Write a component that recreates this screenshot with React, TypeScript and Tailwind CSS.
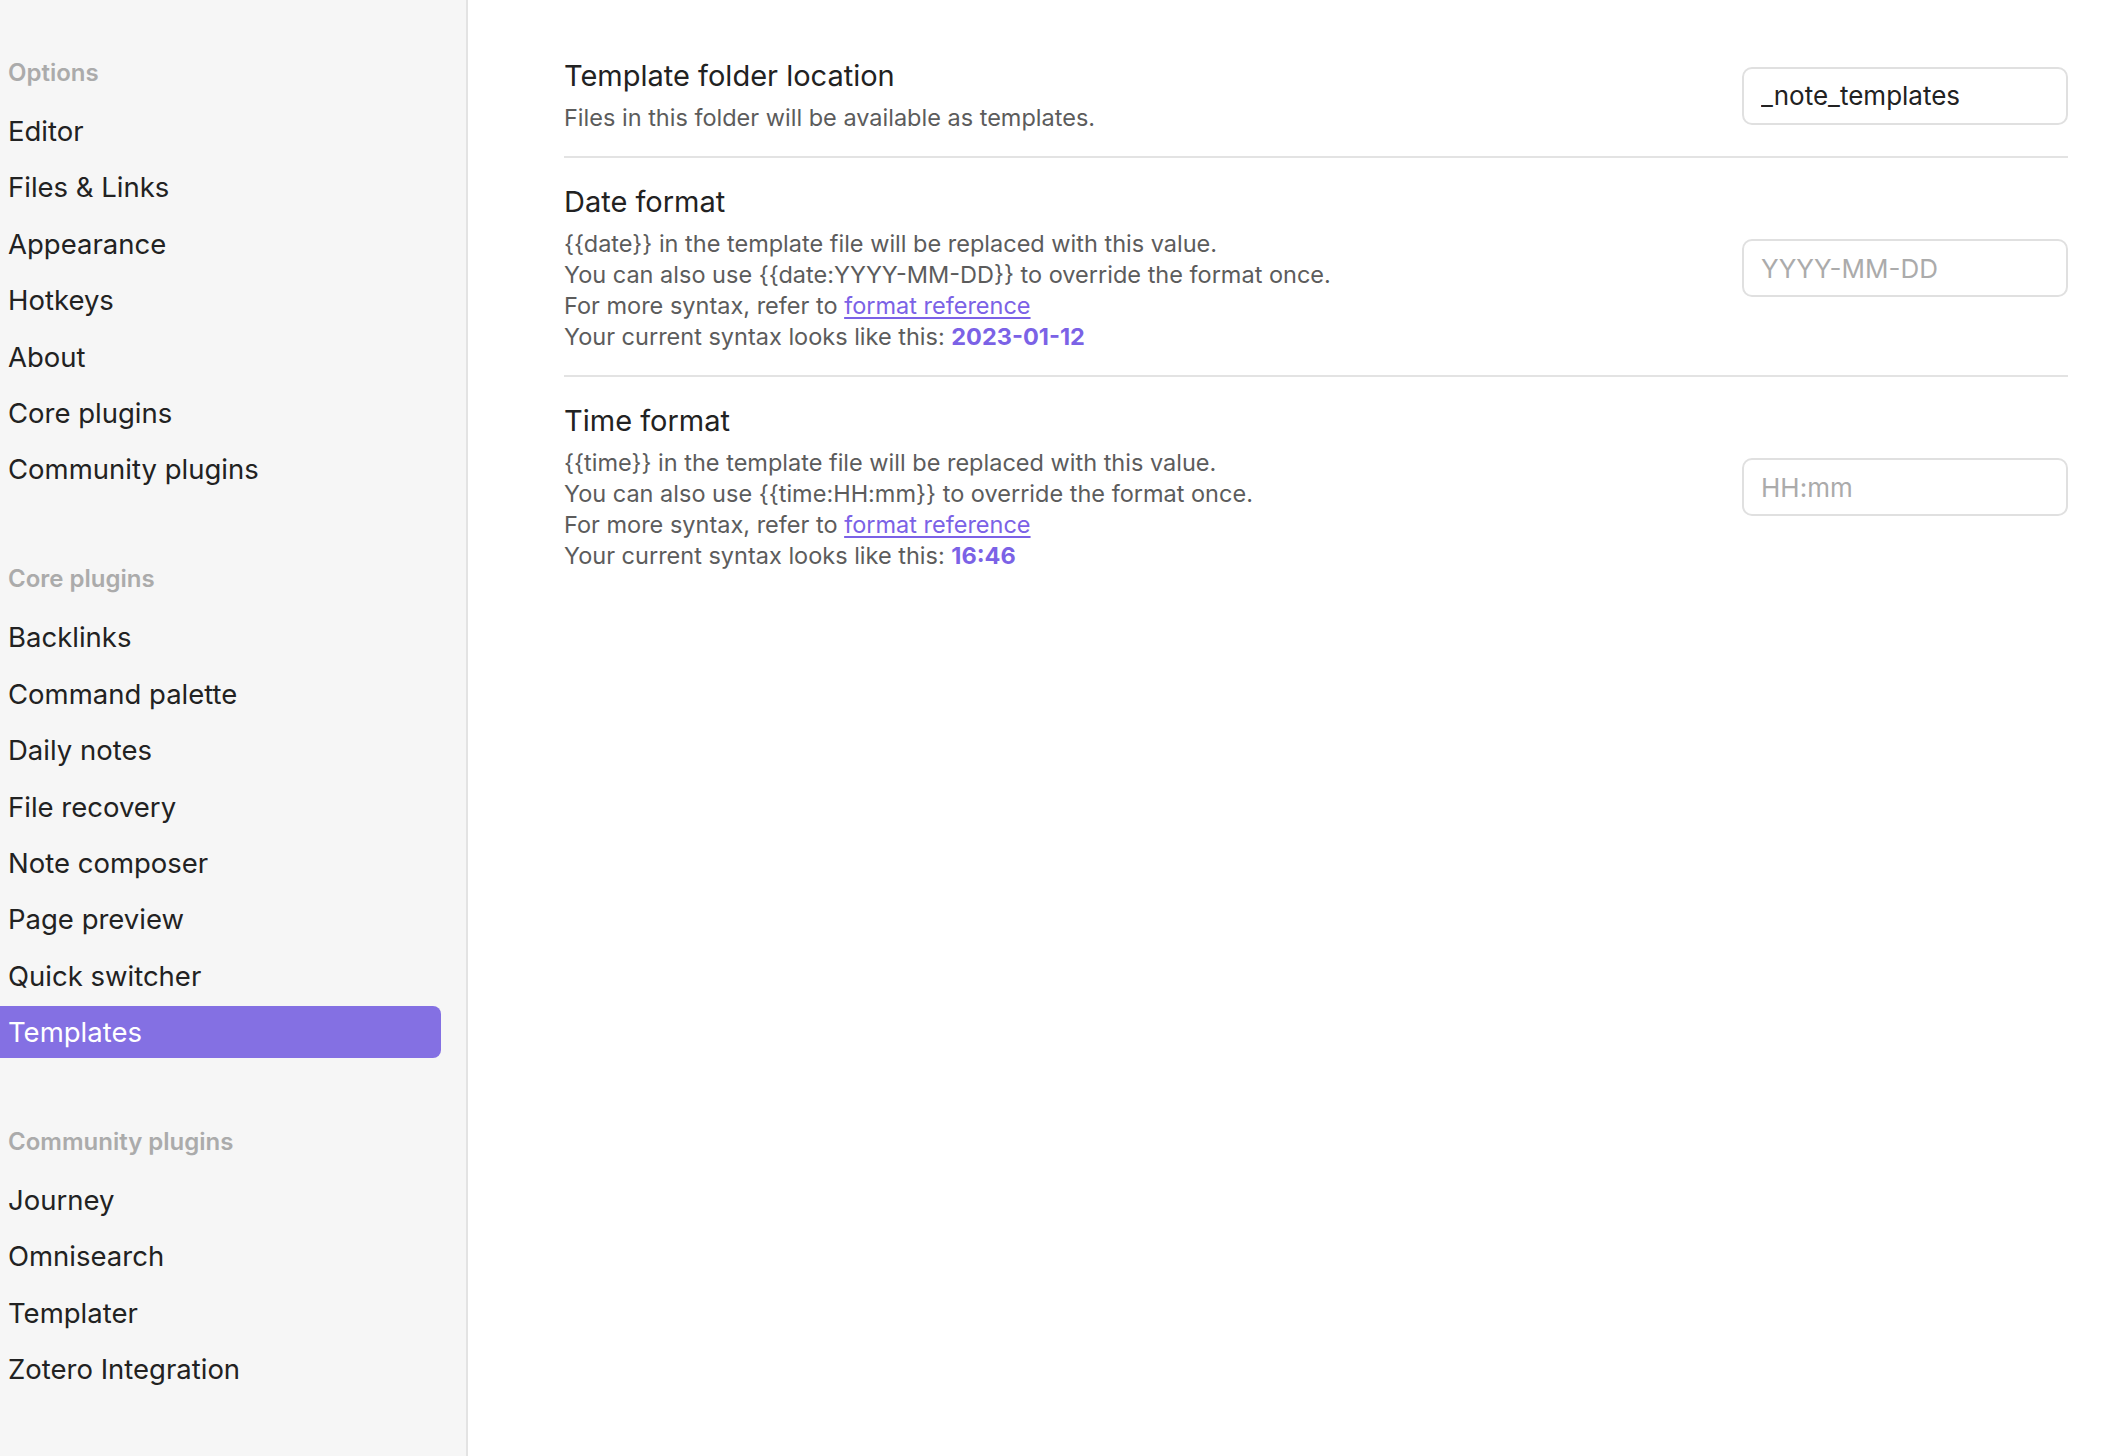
import clsx from "clsx";

type NavGroup = {
  title: string;
  items: string[];
};

const groups: NavGroup[] = [
  {
    title: "Options",
    items: ["Editor", "Files & Links", "Appearance", "Hotkeys", "About", "Core plugins", "Community plugins"],
  },
  {
    title: "Core plugins",
    items: [
      "Backlinks",
      "Command palette",
      "Daily notes",
      "File recovery",
      "Note composer",
      "Page preview",
      "Quick switcher",
      "Templates",
    ],
  },
  {
    title: "Community plugins",
    items: ["Journey", "Omnisearch", "Templater", "Zotero Integration"],
  },
];

const ACTIVE = "Templates";

type SettingProps = {
  name: string;
  first?: boolean;
  value?: string;
  placeholder?: string;
  children: React.ReactNode;
};

function Setting({ name, first, value, placeholder, children }: SettingProps) {
  return (
    <div
      className={clsx(
        "flex items-center justify-between pb-[23px] pt-[26px]",
        !first && "border-t-2 border-[#e3e3e3]",
      )}
    >
      <div>
        <div className="text-[29px] leading-[36px] text-[#222222]">{name}</div>
        <div className="mt-[8px] text-[23.5px] leading-[31px] text-[#5c5c5c]">{children}</div>
      </div>
      <input
        readOnly
        defaultValue={value}
        placeholder={placeholder}
        className="h-[58px] w-[326px] shrink-0 rounded-[10px] border-2 border-[#e0e0e0] bg-white px-[17px] text-[26px] text-[#222222] outline-none placeholder:text-[#ababab]"
      />
    </div>
  );
}

function Ref() {
  return (
    <>
      For more syntax, refer to{" "}
      <a className="text-[#7b62e6] underline underline-offset-[3px]">format reference</a>
    </>
  );
}

export default function App() {
  return (
    <div className="flex min-h-screen w-full bg-white font-['Inter','Noto_Sans',sans-serif]">
      <aside className="w-[468px] shrink-0 border-r-2 border-[#e3e3e3] bg-[#f6f6f6] pr-[25px] pt-[57px]">
        {groups.map((group, i) => (
          <div key={group.title} className={clsx(i > 0 && "mt-[68px]")}>
            <div className="h-[32px] pl-[8px] text-[24px] font-semibold leading-[32px] text-[#ababab]">
              {group.title}
            </div>
            <div className="mt-[16px] flex flex-col gap-[4.4px]">
              {group.items.map((item) => (
                <div
                  key={item}
                  className={clsx(
                    "h-[52px] rounded-r-[8px] pl-[8px] text-[27.5px] leading-[52px]",
                    item === ACTIVE ? "bg-[#8470e3] text-white" : "text-[#222222]",
                  )}
                >
                  {item}
                </div>
              ))}
            </div>
          </div>
        ))}
      </aside>

      <main className="flex-1 pl-[96px] pr-[48px] pt-[32px]">
        <Setting first name="Template folder location" value="_note_templates">
          Files in this folder will be available as templates.
        </Setting>
        <Setting name="Date format" placeholder="YYYY-MM-DD">
          <div>{"{{date}}"} in the template file will be replaced with this value.</div>
          <div>You can also use {"{{date:YYYY-MM-DD}}"} to override the format once.</div>
          <div>
            <Ref />
          </div>
          <div>
            Your current syntax looks like this:{" "}
            <b className="font-bold text-[#7b62e6]">2023-01-12</b>
          </div>
        </Setting>
        <Setting name="Time format" placeholder="HH:mm">
          <div>{"{{time}}"} in the template file will be replaced with this value.</div>
          <div>You can also use {"{{time:HH:mm}}"} to override the format once.</div>
          <div>
            <Ref />
          </div>
          <div>
            Your current syntax looks like this: <b className="font-bold text-[#7b62e6]">16:46</b>
          </div>
        </Setting>
      </main>
    </div>
  );
}
